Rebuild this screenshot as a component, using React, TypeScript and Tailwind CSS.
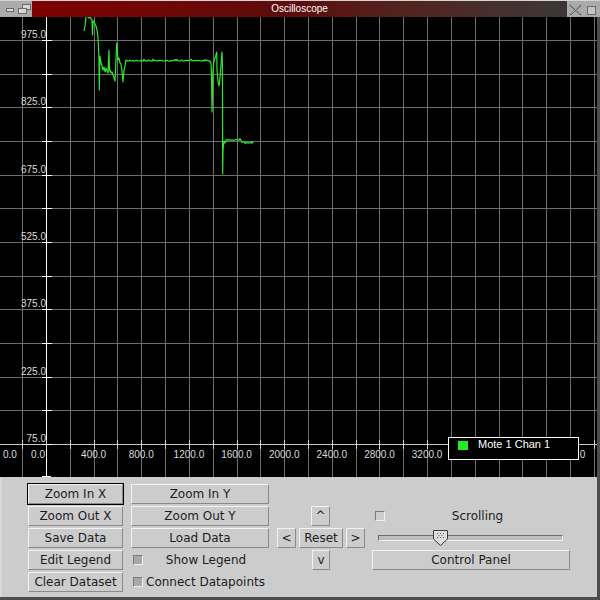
import clsx from "clsx";

const X0 = 46;
const DX = 23.82;
const Y0 = 23; // svg y of the 975.0 line
const DY = 33.667;

const noise = (i: number) => {
  const v = Math.sin(i * 12.9898) * 43758.5453;
  return v - Math.floor(v) - 0.5;
};

const flat = (from: number, to: number, y: number, seed: number) => {
  const pts: [number, number][] = [];
  for (let x = from; x <= to; x += 1) {
    const n = noise(x + seed);
    pts.push([x, y + n * 1.2 + (n > 0.42 ? -2 : 0)]);
  }
  return pts;
};

// page coordinates, converted to svg below
const trace: [number, number][] = [
  [84, 31], [85, 26], [86, 17], [87, 16], [88, 17], [89, 18], [90, 16], [91, 19],
  [92, 20], [92.5, 35], [93, 22], [94, 21], [95, 24], [96, 26], [97, 30], [98, 38],
  [98.5, 46], [99, 62], [99.3, 90], [99.6, 72], [100, 56], [101, 63], [102, 66],
  [103, 70], [104, 67], [105, 72], [106, 68], [107, 71], [108, 73], [109, 50],
  [109.5, 71], [110, 70], [111, 73], [112, 72], [113, 75], [114, 77], [115, 81],
  [116, 60], [116.7, 43], [117.3, 50], [118, 60], [119, 58], [120, 63], [121, 64],
  [122, 71], [123, 82], [124, 70], [125, 66], [126, 60],
  ...flat(127, 210, 60.7, 3),
  [211, 63], [211.5, 76], [212, 112], [212.5, 90], [213, 70], [214, 61], [215, 58],
  [216, 55], [216.7, 52], [217, 70], [218, 81], [219, 86], [220, 78], [221, 64],
  [222, 52], [222.4, 62], [222.7, 174], [223, 150], [224, 141], [225, 143],
  ...flat(226, 241, 140, 7),
  ...flat(242, 253, 143, 11),
];

const polyPoints = trace.map(([x, y]) => `${x},${(y - 17).toFixed(1)}`).join(" ");

const yLabels = ["975.0", "825.0", "675.0", "525.0", "375.0", "225.0", "75.0"];

function Plot() {
  const vlines = Array.from({ length: 25 }, (_, i) => X0 + (i - 1) * DX);
  const hlines = Array.from({ length: 14 }, (_, i) => Y0 + i * DY);
  const axisY = Y0 + 12 * DY;

  return (
    <div className="relative h-[460px] w-full bg-black">
      <svg width="597" height="460" className="block" shapeRendering="crispEdges">
        {vlines.map((x) => (
          <line key={"v" + x} x1={Math.round(x) + 0.5} y1={0} x2={Math.round(x) + 0.5} y2={460} stroke="#6e6e6e" />
        ))}
        {hlines.map((y) => (
          <line key={"h" + y} x1={0} y1={Math.round(y) + 0.5} x2={597} y2={Math.round(y) + 0.5} stroke="#6e6e6e" />
        ))}
        <line x1={0} y1={Math.round(axisY) + 0.5} x2={597} y2={Math.round(axisY) + 0.5} stroke="#c8c8c8" />
        <line x1={46.5} y1={0} x2={46.5} y2={460} stroke="#ffffff" />
        {hlines.slice(0, 13).map((y) => (
          <line key={"t" + y} x1={42} y1={Math.round(y) + 0.5} x2={52} y2={Math.round(y) + 0.5} stroke="#ffffff" />
        ))}
        {vlines.map((x) => (
          <line key={"xt" + x} x1={Math.round(x) + 0.5} y1={Math.round(axisY) - 4} x2={Math.round(x) + 0.5} y2={Math.round(axisY) + 5} stroke="#d0d0d0" />
        ))}
        <line x1={42} y1={459.5} x2={51} y2={459.5} stroke="#ffffff" />
        <g fontFamily="'Liberation Sans', Arial, sans-serif" fontSize="10" fill="#dcdcdc" shapeRendering="auto">
          {yLabels.map((t, i) => (
            <text key={t} x={46} y={Math.round(Y0 + i * 2 * DY) - 2} textAnchor="end">
              {t}
            </text>
          ))}
          <text x={3} y={441}>0.0</text>
          <text x={45} y={441} textAnchor="end">0.0</text>
          {Array.from({ length: 11 }, (_, i) => i + 1).map((k) => (
            <text key={k} x={X0 + 2 * k * DX} y={441} textAnchor="middle">
              {(k * 400).toFixed(1)}
            </text>
          ))}
        </g>
        <polyline points={polyPoints} fill="none" stroke="#2fe62f" strokeWidth="1.2" shapeRendering="auto" strokeLinejoin="round" />
      </svg>
      <div className="absolute left-[448px] top-[420px] flex h-[23px] w-[131px] items-start border border-white bg-black">
        <div className="ml-[9px] mt-[3px] h-[9px] w-[10px] bg-[#22ee22]" />
        <span className="ml-[10px] font-['Liberation_Sans',Arial,sans-serif] text-[11px] leading-[13px] text-white">
          Mote 1 Chan 1
        </span>
      </div>
    </div>
  );
}

function TitleBar() {
  return (
    <div className="flex h-[17px] w-full border-t border-[#d4d4d4]">
      <div className="w-[32px] bg-[#ababab]">
        <svg width="32" height="16" shapeRendering="crispEdges">
          <rect x="6.5" y="7.5" width="7" height="3" fill="#d6d6d6" stroke="#6a6a6a" />
          <rect x="22.5" y="3.5" width="8" height="5" fill="#d6d6d6" stroke="#6a6a6a" />
          <rect x="18.5" y="7.5" width="8" height="5" fill="#d6d6d6" stroke="#6a6a6a" />
        </svg>
      </div>
      <div className="flex flex-1 items-center justify-center bg-linear-to-r from-[#800000] via-[#5c0c0c] to-[#3b3737] font-['Liberation_Sans',Arial,sans-serif] text-[10px] leading-none text-white">
        Oscilloscope
      </div>
      <div className="w-[33px] bg-[#ababab]">
        <svg width="33" height="16">
          <path d="M3 4 L14 14 M14 4 L3 14" stroke="#5e5e5e" strokeWidth="1.6" />
          <path d="M4 4 L13 13 M13 4 L4 13" stroke="#dcdcdc" strokeWidth="0.5" />
          <rect x="20.5" y="5.5" width="8" height="8" fill="#c4c4c4" stroke="#6a6a6a" shapeRendering="crispEdges" />
        </svg>
      </div>
    </div>
  );
}

function Btn({ children, className, focused }: { children: React.ReactNode; className?: string; focused?: boolean }) {
  return (
    <button
      className={clsx(
        "flex h-[20px] items-center justify-center whitespace-nowrap border border-t-[#f2f2f2] border-l-[#f2f2f2] border-b-[#8a8a8a] border-r-[#8a8a8a] bg-[#cccccc] text-[12px] leading-none text-[#1c1c1c]",
        focused && "outline outline-1 outline-black",
        className
      )}
    >
      {children}
    </button>
  );
}

function Check({ dim }: { dim?: boolean }) {
  return (
    <div
      className={clsx(
        "h-[10px] w-[10px] shrink-0 border border-t-[#7a7a7a] border-l-[#7a7a7a] border-b-[#efefef] border-r-[#efefef]",
        dim ? "bg-[#a9a9a9]" : "bg-[#cccccc]"
      )}
    />
  );
}

function Panel() {
  return (
    <div className="flex flex-1 border-l-2 border-l-[#d8d8d8] pl-[26px] pt-[7px] font-['DejaVu_Sans',sans-serif]">
      <div className="flex w-[95px] flex-col gap-[2px]">
        <Btn focused>Zoom In X</Btn>
        <Btn>Zoom Out X</Btn>
        <Btn>Save Data</Btn>
        <Btn>Edit Legend</Btn>
        <Btn>Clear Dataset</Btn>
      </div>
      <div className="ml-[8px] flex w-[138px] flex-col gap-[2px]">
        <Btn>Zoom In Y</Btn>
        <Btn>Zoom Out Y</Btn>
        <Btn>Load Data</Btn>
        <div className="flex h-[20px] items-center pl-[2px]">
          <Check dim />
          <span className="flex-1 text-center text-[12px] text-[#1c1c1c]">Show Legend</span>
        </div>
        <div className="flex h-[20px] items-center pl-[2px]">
          <Check dim />
          <span className="ml-[3px] whitespace-nowrap text-[12px] text-[#1c1c1c]">Connect Datapoints</span>
        </div>
      </div>
      <div className="ml-[8px] mt-[22px] flex w-[89px] flex-col gap-[2px]">
        <div className="flex h-[20px] pl-[34px]">
          <Btn className="w-[19px]">^</Btn>
        </div>
        <div className="flex h-[20px] gap-[3px]">
          <Btn className="w-[19px]">&lt;</Btn>
          <Btn className="w-[44px]">Reset</Btn>
          <Btn className="w-[19px]">&gt;</Btn>
        </div>
        <div className="flex h-[20px] pl-[35px]">
          <Btn className="w-[18px]">v</Btn>
        </div>
      </div>
      <div className="ml-[6px] mt-[22px] flex w-[198px] flex-col gap-[2px]">
        <div className="flex h-[20px] items-center pl-[3px]">
          <Check />
          <span className="flex-1 text-center text-[12px] text-[#1c1c1c]">Scrolling</span>
        </div>
        <div className="flex h-[20px] items-center pl-[6px]">
          <div className="relative h-[6px] w-[185px] border border-t-[#6e6e6e] border-l-[#6e6e6e] border-b-[#f0f0f0] border-r-[#f0f0f0] bg-[#bdbdbd]">
            <svg width="15" height="16" className="absolute left-[54px] top-[-6px]">
              <path d="M0.5 0.5 H14.5 V9 L7.5 15.5 L0.5 9 Z" fill="#dedede" stroke="#3a3a3a" />
              <g fill="#555">
                <rect x="4" y="3" width="1" height="1" />
                <rect x="7" y="3" width="1" height="1" />
                <rect x="10" y="3" width="1" height="1" />
                <rect x="5.5" y="5" width="1" height="1" />
                <rect x="8.5" y="5" width="1" height="1" />
                <rect x="4" y="7" width="1" height="1" />
                <rect x="7" y="7" width="1" height="1" />
                <rect x="10" y="7" width="1" height="1" />
              </g>
            </svg>
          </div>
        </div>
        <Btn className="w-[198px]">Control Panel</Btn>
      </div>
    </div>
  );
}

export default function App() {
  return (
    <div className="flex h-[600px] w-[600px] flex-col overflow-hidden bg-[#cccccc]">
      <TitleBar />
      <div className="flex flex-1 flex-col border-r-[3px] border-b-[3px] border-[#4d4d4d]">
        <Plot />
        <Panel />
      </div>
    </div>
  );
}
